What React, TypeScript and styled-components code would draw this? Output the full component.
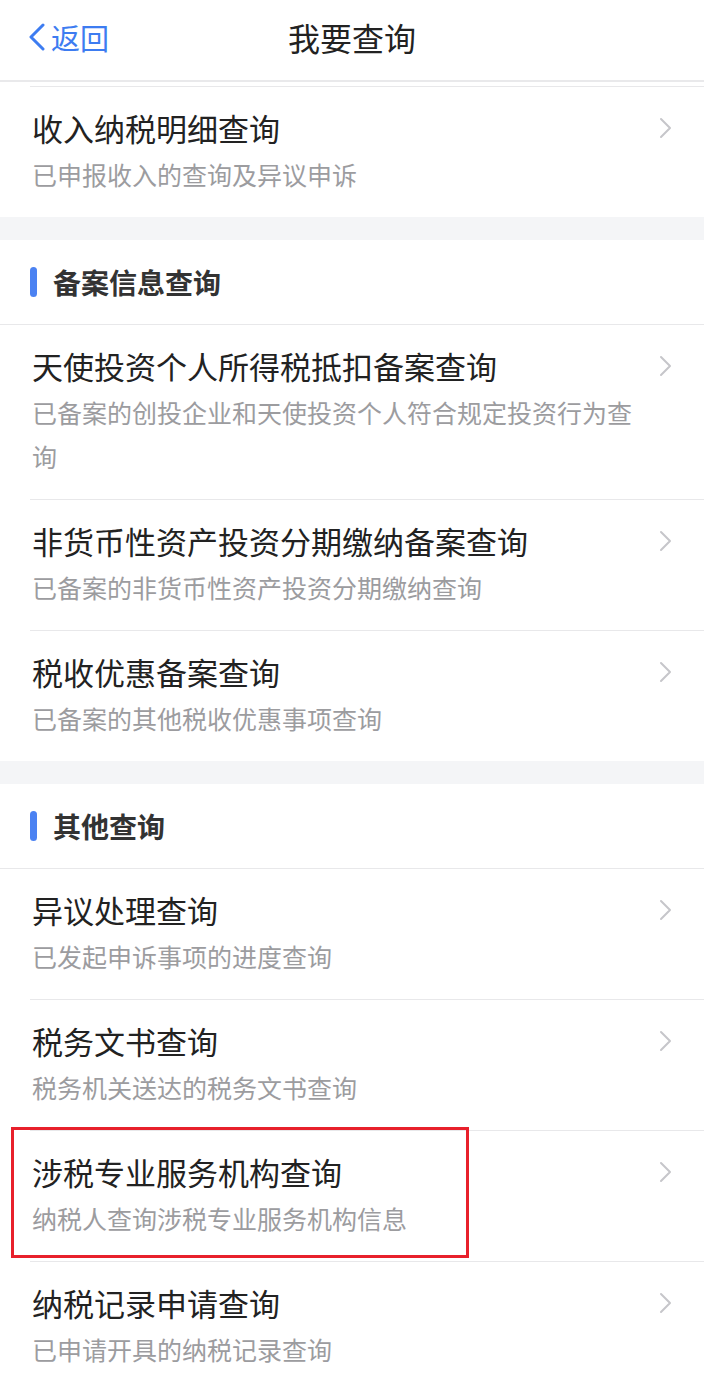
import styled, { createGlobalStyle } from "styled-components";

const GlobalStyle = createGlobalStyle`
  body {
    margin: 0;
    background: #fff;
    font-family: "Noto Sans CJK SC", "Noto Sans", sans-serif;
  }
`;

const Page = styled.div`
  width: 704px;
  min-height: 1395px;
  background: #fff;
`;

const NavBar = styled.header`
  height: 82px;
  box-sizing: border-box;
  display: grid;
  grid-template-columns: 1fr auto 1fr;
  align-items: center;
  border-bottom: 2px solid #e9e9eb;
  padding: 0 28px 6px;
`;

const BackLink = styled.a`
  display: flex;
  align-items: center;
  gap: 5px;
  color: #3d7cf1;
  font-size: 29px;
  text-decoration: none;
`;

const NavTitle = styled.h1`
  margin: 0;
  font-size: 32px;
  font-weight: 400;
  color: #222;
`;

const List = styled.div`
  padding-top: 4px;
`;

const Band = styled.div`
  height: 23px;
  background: #f4f5f7;
`;

const SectionHead = styled.div`
  height: 84px;
  display: flex;
  align-items: center;
  gap: 16px;
  padding-left: 30px;
  border-bottom: 1px solid #e8e8ea;
  font-size: 28px;
  font-weight: 700;
  color: #333;
`;

const Marker = styled.span`
  width: 7px;
  height: 30px;
  border-radius: 4px;
  background: #4b82f2;
`;

const Row = styled.div`
  position: relative;
`;

const RowBody = styled.div<{ $divider: boolean }>`
  margin-left: 30px;
  padding: 19px 31px 21px 2px;
  display: flex;
  align-items: flex-start;
  border-top: ${(p) => (p.$divider ? "1px solid #e8e8ea" : "none")};
`;

const Texts = styled.div`
  flex: 1;
  max-width: 612px;
`;

const Title = styled.div`
  font-size: 31px;
  line-height: 44px;
  color: #222;
`;

const Sub = styled.div`
  margin-top: 2px;
  font-size: 25px;
  line-height: 44px;
  color: #9c9c9f;
`;

const Arrow = styled.div`
  margin-left: auto;
  height: 44px;
  display: flex;
  align-items: center;
`;

const Highlight = styled.div`
  position: absolute;
  top: -3px;
  left: 11px;
  width: 458px;
  height: 131px;
  border: 3px solid #e8202b;
  box-sizing: border-box;
  pointer-events: none;
`;

type Item = { title: string; sub: string; marked?: boolean };

const Chevron = () => (
  <svg width="14" height="22" viewBox="0 0 14 22">
    <polyline points="2,2 11,11 2,20" fill="none" stroke="#c6c6ca" strokeWidth="2" strokeLinecap="round" strokeLinejoin="round" />
  </svg>
);

const ListRow = ({ item, divider }: { item: Item; divider: boolean }) => (
  <Row>
    <RowBody $divider={divider}>
      <Texts>
        <Title>{item.title}</Title>
        <Sub>{item.sub}</Sub>
      </Texts>
      <Arrow>
        <Chevron />
      </Arrow>
    </RowBody>
    {item.marked && <Highlight />}
  </Row>
);

const filing: Item[] = [
  { title: "天使投资个人所得税抵扣备案查询", sub: "已备案的创投企业和天使投资个人符合规定投资行为查询" },
  { title: "非货币性资产投资分期缴纳备案查询", sub: "已备案的非货币性资产投资分期缴纳查询" },
  { title: "税收优惠备案查询", sub: "已备案的其他税收优惠事项查询" },
];

const other: Item[] = [
  { title: "异议处理查询", sub: "已发起申诉事项的进度查询" },
  { title: "税务文书查询", sub: "税务机关送达的税务文书查询" },
  { title: "涉税专业服务机构查询", sub: "纳税人查询涉税专业服务机构信息", marked: true },
  { title: "纳税记录申请查询", sub: "已申请开具的纳税记录查询" },
];

export default function App() {
  return (
    <Page>
      <GlobalStyle />
      <NavBar>
        <BackLink href="#">
          <svg width="18" height="28" viewBox="0 0 18 28">
            <polyline points="15,2 3,14 15,26" fill="none" stroke="#3d7cf1" strokeWidth="3" strokeLinecap="round" strokeLinejoin="round" />
          </svg>
          返回
        </BackLink>
        <NavTitle>我要查询</NavTitle>
        <span />
      </NavBar>
      <List>
        <ListRow item={{ title: "收入纳税明细查询", sub: "已申报收入的查询及异议申诉" }} divider />
        <Band />
        <SectionHead>
          <Marker />
          备案信息查询
        </SectionHead>
        {filing.map((it, i) => (
          <ListRow key={it.title} item={it} divider={i > 0} />
        ))}
        <Band />
        <SectionHead>
          <Marker />
          其他查询
        </SectionHead>
        {other.map((it, i) => (
          <ListRow key={it.title} item={it} divider={i > 0} />
        ))}
      </List>
    </Page>
  );
}
